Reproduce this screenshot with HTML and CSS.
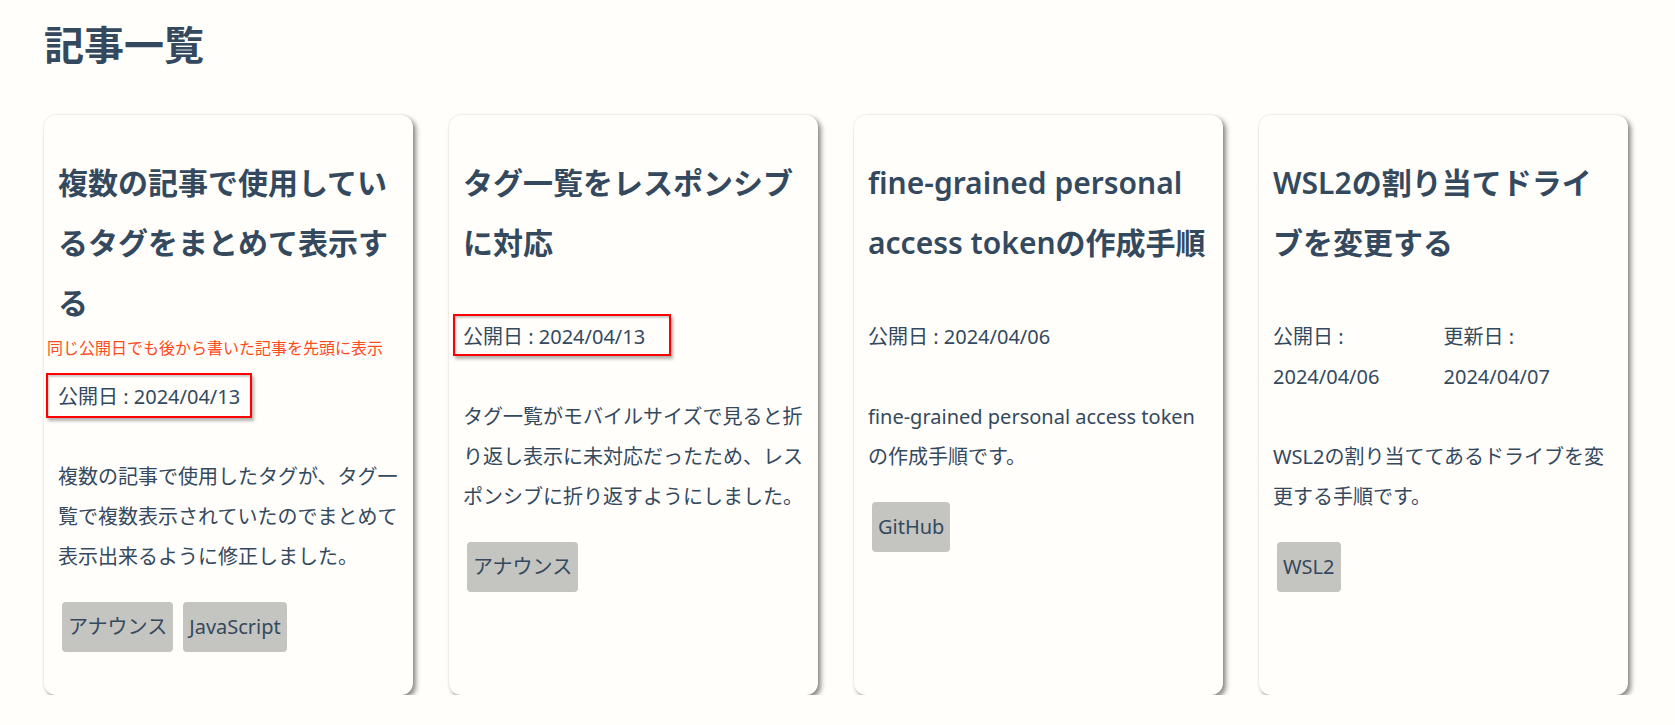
FILE: index.html
```html
<!DOCTYPE html>
<html lang="ja">
<head>
<meta charset="utf-8">
<title>記事一覧</title>
<link rel="stylesheet" href="styles.css">
</head>
<body>
<main class="page">
  <h1 class="page-title">記事一覧</h1>
  <div class="card-grid">
    <article class="card">
      <h2 class="card-title">複数の記事で使用しているタグをまとめて表示する</h2>
      <div class="dates"><p class="date">公開日 : 2024/04/13</p></div>
      <p class="desc">複数の記事で使用したタグが、タグ一覧で複数表示されていたのでまとめて表示出来るように修正しました。</p>
      <div class="tags"><span class="tag">アナウンス</span><span class="tag">JavaScript</span></div>
      <span class="note">同じ公開日でも後から書いた記事を先頭に表示</span>
      <span class="mark mark-1"></span>
    </article>
    <article class="card">
      <h2 class="card-title">タグ一覧をレスポンシブに対応</h2>
      <div class="dates"><p class="date">公開日 : 2024/04/13</p></div>
      <p class="desc">タグ一覧がモバイルサイズで見ると折り返し表示に未対応だったため、レスポンシブに折り返すようにしました。</p>
      <div class="tags"><span class="tag">アナウンス</span></div>
      <span class="mark mark-2"></span>
    </article>
    <article class="card">
      <h2 class="card-title">fine-grained personal access tokenの作成手順</h2>
      <div class="dates"><p class="date">公開日 : 2024/04/06</p></div>
      <p class="desc">fine-grained personal access tokenの作成手順です。</p>
      <div class="tags"><span class="tag">GitHub</span></div>
    </article>
    <article class="card">
      <h2 class="card-title">WSL2の割り当てドライブを変更する</h2>
      <div class="dates"><p class="date">公開日 : 2024/04/06</p><p class="date">更新日 : 2024/04/07</p></div>
      <p class="desc">WSL2の割り当ててあるドライブを変更する手順です。</p>
      <div class="tags"><span class="tag">WSL2</span></div>
    </article>
  </div>
</main>
</body>
</html>
```
FILE: styles.css
```css
html, body {
  margin: 0;
  padding: 0;
  background: #fffefa;
}
body {
  font-family: "Noto Sans", "Noto Sans CJK JP", sans-serif;
  color: #34495e;
  font-size: 20px;
  line-height: 2;
}
.page {
  padding: 16px 47px 0 44px;
}
.page-title {
  margin: 0 0 41px 0;
  font-size: 40px;
  line-height: 58px;
  font-weight: 700;
}
.card-grid {
  display: grid;
  grid-template-columns: repeat(4, 1fr);
  column-gap: 36px;
}
.card {
  position: relative;
  background: #fffefa;
  border-radius: 12px;
  padding: 38px 14px 38px 14px;
  box-shadow: 3px 3px 5px rgba(0, 0, 0, 0.45), 0 0 2px rgba(0, 0, 0, 0.12);
  display: flex;
  flex-direction: column;
  height: 580px;
  box-sizing: border-box;
}
.card-title {
  margin: 0;
  font-size: 30px;
  line-height: 60px;
  font-weight: 600;
}
.dates {
  display: flex;
  margin-top: 44px;
}
.date {
  margin: 0;
  flex: 1 1 0;
  line-height: 40px;
}
.desc {
  margin: 40px 0 0 0;
  line-height: 40px;
}
.tags {
  display: flex;
  flex-wrap: wrap;
  gap: 10px;
  margin: 25px 0 0 4px;
}
.tag {
  background: #c4c4c0;
  border-radius: 4px;
  padding: 5px 6px;
  line-height: 40px;
}
.note {
  position: absolute;
  left: 3px;
  top: 222px;
  font-size: 16px;
  line-height: 22px;
  color: #ff4a1c;
  white-space: nowrap;
}
.mark {
  position: absolute;
  border: 2px solid #ff0000;
  box-shadow: 2px 3px 3px rgba(0, 0, 0, 0.3), inset 1px 2px 2px rgba(0, 0, 0, 0.2);
  box-sizing: border-box;
}
.mark-1 {
  left: 2px;
  top: 258px;
  width: 206px;
  height: 45px;
}
.mark-2 {
  left: 4px;
  top: 199px;
  width: 218px;
  height: 42px;
}
```
